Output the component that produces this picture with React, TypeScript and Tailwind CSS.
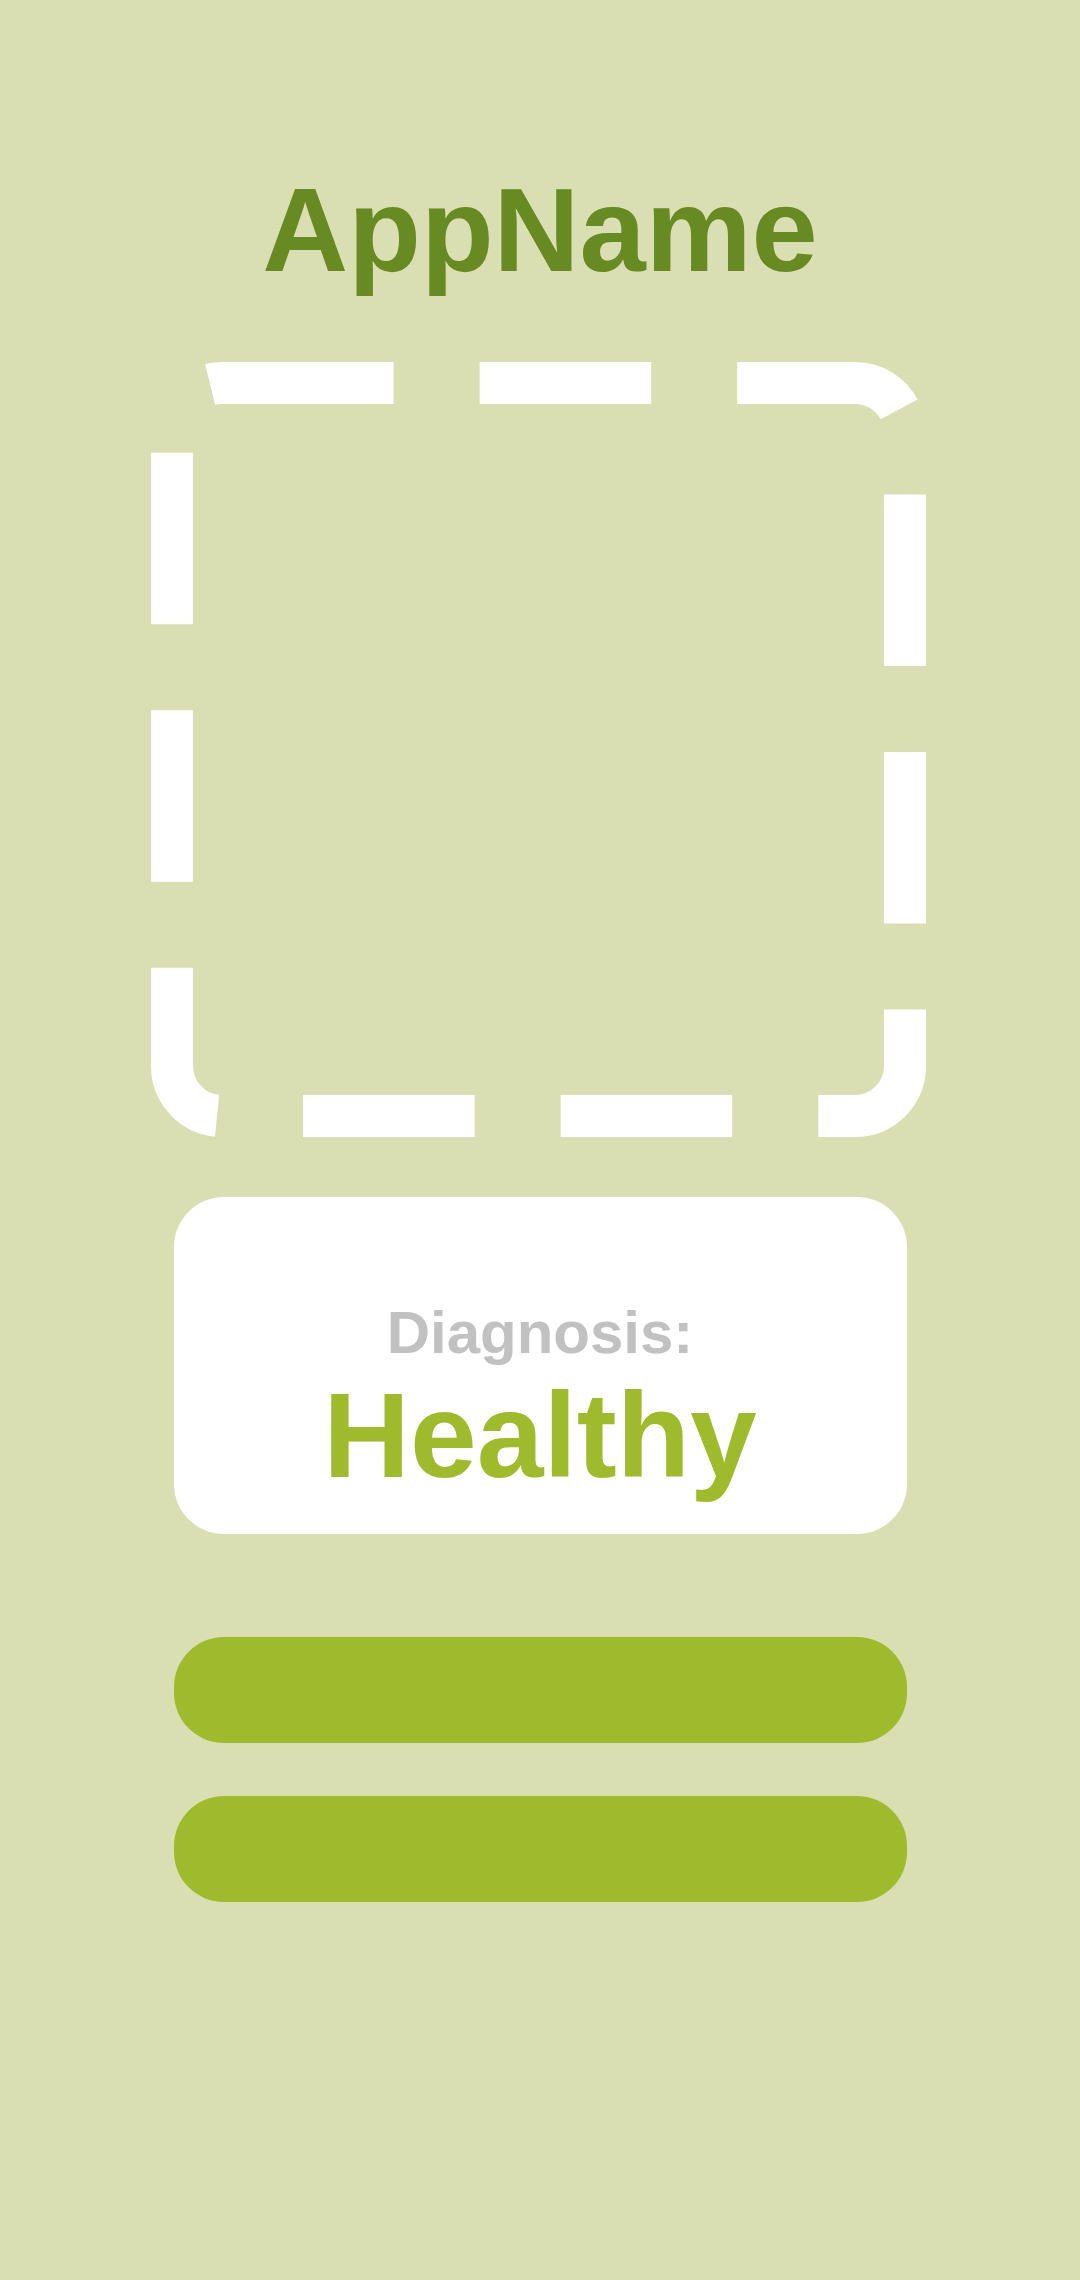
import React from 'react';

const DashedFrame: React.FC = () => (
  <svg width="775" height="775" viewBox="0 0 775 775" className="block">
    <rect
      x="21"
      y="21"
      width="733"
      height="733"
      rx="50"
      ry="50"
      fill="none"
      stroke="#ffffff"
      strokeWidth="42"
      strokeDasharray="171.6 86"
    />
  </svg>
);

const App: React.FC = () => {
  return (
    <div
      className="w-[1080px] h-[2280px] bg-[#dadfb3] flex flex-col items-center"
      style={{ fontFamily: '"Liberation Sans", Arial, sans-serif' }}
    >
      <h1 className="mt-[170px] text-[119px] leading-none font-bold text-[#678a22]">AppName</h1>

      <div className="mt-[73px] mr-[4px]">
        <DashedFrame />
      </div>

      <div className="mt-[60px] w-[733px] h-[337px] bg-white rounded-[50px] flex flex-col items-center pt-[106px]">
        <p className="text-[60px] leading-none font-bold text-[#c1c1c1]">Diagnosis:</p>
        <p className="mt-[12px] text-[120px] leading-none font-bold text-[#a0ba2e]">Healthy</p>
      </div>

      <button className="mt-[103px] w-[733px] h-[106px] rounded-[50px] bg-[#a0ba2e]" />
      <button className="mt-[53px] w-[733px] h-[106px] rounded-[50px] bg-[#a0ba2e]" />
    </div>
  );
};

export default App;
